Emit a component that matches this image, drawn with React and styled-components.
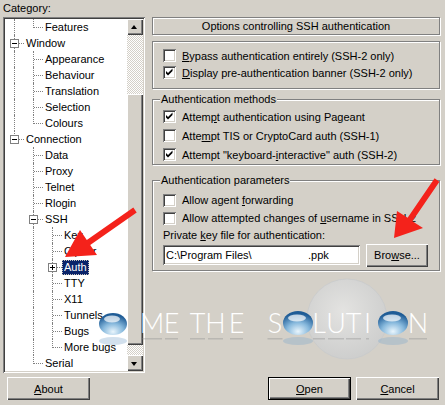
import React from "react";
import styled, { createGlobalStyle, css } from "styled-components";

const TREE = [
  { label: "Features", guides: ["pipe", "elbow"] },
  { label: "Window", guides: ["tee"], toggle: "minus" },
  { label: "Appearance", guides: ["pipe", "tee"] },
  { label: "Behaviour", guides: ["pipe", "tee"] },
  { label: "Translation", guides: ["pipe", "tee"] },
  { label: "Selection", guides: ["pipe", "tee"] },
  { label: "Colours", guides: ["pipe", "elbow"] },
  { label: "Connection", guides: ["elbow"], toggle: "minus" },
  { label: "Data", guides: ["blank", "tee"] },
  { label: "Proxy", guides: ["blank", "tee"] },
  { label: "Telnet", guides: ["blank", "tee"] },
  { label: "Rlogin", guides: ["blank", "tee"] },
  { label: "SSH", guides: ["blank", "tee"], toggle: "minus" },
  { label: "Kex", guides: ["blank", "pipe", "tee"] },
  { label: "Cipher", guides: ["blank", "pipe", "tee"] },
  { label: "Auth", guides: ["blank", "pipe", "tee"], toggle: "plus", selected: true },
  { label: "TTY", guides: ["blank", "pipe", "tee"] },
  { label: "X11", guides: ["blank", "pipe", "tee"] },
  { label: "Tunnels", guides: ["blank", "pipe", "tee"] },
  { label: "Bugs", guides: ["blank", "pipe", "tee"] },
  { label: "More bugs", guides: ["blank", "pipe", "elbow"] },
  { label: "Serial", guides: ["blank", "elbow"] },
];

function App() {
  return (
    <>
      <GlobalStyle />
      <Dialog>
        <Main>
          <LeftPane>
            <CategoryLabel>Category:</CategoryLabel>
            <TreeBox>
              <TreeList>
                {TREE.map((item) => (
                  <TreeRow key={item.label}>
                    {item.guides.map((g, i) => (
                      <Guide key={i} $kind={g}>
                        {item.toggle && i === item.guides.length - 1 && (
                          <Toggle $plus={item.toggle === "plus"} />
                        )}
                      </Guide>
                    ))}
                    <NodeLabel $selected={item.selected}>{item.label}</NodeLabel>
                  </TreeRow>
                ))}
              </TreeList>
              <ScrollBar>
                <ArrowButton $dir="up" />
                <Track $h={59} />
                <Thumb />
                <Track $h={10} />
                <ArrowButton $dir="down" />
              </ScrollBar>
            </TreeBox>
          </LeftPane>

          <RightPane>
            <Header>Options controlling SSH authentication</Header>

            <Group $mt={6} $pad="5px 0 7px">
              <CheckRow $h={17}>
                <Checkbox />
                <span><u>B</u>ypass authentication entirely (SSH-2 only)</span>
              </CheckRow>
              <CheckRow $h={17}>
                <Checkbox checked />
                <span><u>D</u>isplay pre-authentication banner (SSH-2 only)</span>
              </CheckRow>
            </Group>

            <Group $mt={10} $pad="0">
              <GroupTitle>Authentication methods</GroupTitle>
              <CheckRow $h={19} $first>
                <Checkbox checked />
                <span>Attem<u>p</u>t authentication using Pageant</span>
              </CheckRow>
              <CheckRow $h={19}>
                <Checkbox />
                <span>Atte<u>m</u>pt TIS or CryptoCard auth (SSH-1)</span>
              </CheckRow>
              <CheckRow $h={19}>
                <Checkbox checked />
                <span>Attempt "keyboard-<u>i</u>nteractive" auth (SSH-2)</span>
              </CheckRow>
            </Group>

            <Group $mt={15} $pad="0 0 3px">
              <GroupTitle>Authentication parameters</GroupTitle>
              <Spacer $h={4} />
              <CheckRow $h={18}>
                <Checkbox />
                <span>Allow agent <u>f</u>orwarding</span>
              </CheckRow>
              <CheckRow $h={18}>
                <Checkbox />
                <span>Allow attempted changes of <u>u</u>sername in SSH-2</span>
              </CheckRow>
              <FieldLabel>Private <u>k</u>ey file for authentication:</FieldLabel>
              <FileRow>
                <TextField>
                  <PathPart>{"C:\\Program Files\\"}</PathPart>
                  <span>.ppk</span>
                </TextField>
                <Button $w={62}>Bro<u>w</u>se...</Button>
              </FileRow>
            </Group>
          </RightPane>
        </Main>

        <ButtonBar>
          <Button $w={83}><u>A</u>bout</Button>
          <BarFill />
          <Button $w={83} $default><u>O</u>pen</Button>
          <Button $w={83}><u>C</u>ancel</Button>
        </ButtonBar>

        <Watermark />
        <Arrows />
      </Dialog>
    </>
  );
}

function Checkbox({ checked }) {
  return (
    <CheckBoxFrame>
      {checked && (
        <svg width="13" height="13" viewBox="0 0 13 13">
          <path d="M3 5 L5 7 L9.5 2.5 L9.5 5 L5 9.5 L3 7.5 Z" fill="#000" />
        </svg>
      )}
    </CheckBoxFrame>
  );
}

function Arrows() {
  return (
    <Overlay width="445" height="405" viewBox="0 0 445 405">
      <polygon
        points="133.3,207.5 86.8,240 80,230 65,257 97,255 90.2,245 136.7,212.5"
        fill="#f4221b"
      />
      <polygon
        points="434.6,178.2 407.6,217.7 397,211 394,238 423,228 412.4,221.3 439.4,181.8"
        fill="#f4221b"
      />
    </Overlay>
  );
}

// letters of the "Home The Solution" watermark (the H sits white on the white tree)
const LETTERS = [
  ["M", 152, 20], ["E", 171.5, 13], ["T", 197.5, 15], ["H", 215.5, 15], ["E", 236.5, 13],
  ["S", 275, 15], ["L", 319, 12], ["U", 336, 16], ["T", 353.5, 15], ["I", 367.5, 3],
  ["N", 418, 18],
];
const DROPS = [
  [113, 324, 14, 11],
  [298, 323, 15, 12],
  [393, 323, 15, 12],
];

function Watermark() {
  return (
    <Overlay width="445" height="405" viewBox="0 0 445 405">
      <defs>
        <radialGradient id="drop" cx="50%" cy="85%" r="75%">
          <stop offset="0" stopColor="#e9f5fc" />
          <stop offset="0.5" stopColor="#86b8dc" />
          <stop offset="1" stopColor="#1f5c96" />
        </radialGradient>
        <radialGradient id="globe" cx="45%" cy="40%" r="60%">
          <stop offset="0" stopColor="#eef0f2" stopOpacity="0.6" />
          <stop offset="1" stopColor="#c9cdd2" stopOpacity="0.55" />
        </radialGradient>
      </defs>
      <circle cx="347" cy="319" r="40" fill="url(#globe)" stroke="#c4c8cc" strokeOpacity="0.6" />

      {/* mirrored reflection under the word */}
      <g fill="#8a8a8a" opacity="0.35">
        {LETTERS.map(([, x, w], i) => (
          <rect key={i} x={x - w / 2} y="338" width={w} height="1.5" />
        ))}
        {DROPS.map(([cx, , rx], i) => (
          <ellipse key={i} cx={cx} cy="341" rx={rx} ry="4" fill="#7fa9cc" />
        ))}
      </g>

      <WatermarkText>
        {LETTERS.map(([ch, x], i) => (
          <text key={i} x={x} y="333" textAnchor="middle" fill="#fff">
            {ch}
          </text>
        ))}
      </WatermarkText>

      {DROPS.map(([cx, cy, rx, ry], i) => (
        <g key={i}>
          <ellipse cx={cx} cy={cy} rx={rx} ry={ry} fill="url(#drop)" />
          <ellipse cx={cx - 1} cy={cy - 5} rx={rx - 6} ry={3.5} fill="#fff" opacity="0.7" />
        </g>
      ))}
    </Overlay>
  );
}

/* Page styling */
const GlobalStyle = createGlobalStyle`
  html, body {
    margin: 0;
    padding: 0;
    background: #d4d0c8;
  }
  body {
    font-family: "Liberation Sans", Arial, sans-serif;
    font-size: 11px;
    color: #000;
  }
`;

const raised = css`
  background: #d4d0c8;
  box-shadow: inset 1px 1px #fff, inset -1px -1px #404040, inset -2px -2px #808080;
`;

const sunken = css`
  box-shadow: inset 1px 1px #808080, inset -1px -1px #fff, inset 2px 2px #404040,
    inset -2px -2px #d4d0c8;
`;

const etched = css`
  border: 1px solid #808080;
  box-shadow: inset 1px 1px #fff, 1px 1px #fff;
`;

const Dialog = styled.div`
  position: relative;
  width: 445px;
  height: 405px;
  overflow: hidden;
  background: #d4d0c8;
`;

const Main = styled.div`
  display: flex;
  height: 373px;
`;

const LeftPane = styled.div`
  display: flex;
  flex-direction: column;
  width: 142px;
  margin-left: 3px;
`;

const CategoryLabel = styled.div`
  height: 17px;
  line-height: 16px;
`;

const TreeBox = styled.div`
  flex: 1;
  display: flex;
  padding: 2px;
  background: #fff;
  ${sunken};
`;

const TreeList = styled.div`
  flex: 1;
  overflow: hidden;
`;

const TreeRow = styled.div`
  display: flex;
  align-items: center;
  height: 16px;
  white-space: nowrap;
`;

const Guide = styled.span`
  position: relative;
  flex: none;
  width: 19px;
  height: 16px;

  &::before {
    content: "";
    position: absolute;
    left: 9px;
    top: 0;
    height: ${(p) => (p.$kind === "blank" ? 0 : p.$kind === "elbow" ? 9 : 16)}px;
    border-left: ${(p) => (p.$kind === "blank" ? "none" : "1px dotted #808080")};
  }

  &::after {
    content: "";
    position: absolute;
    left: 10px;
    top: 8px;
    width: 9px;
    border-top: ${(p) =>
      p.$kind === "tee" || p.$kind === "elbow" ? "1px dotted #808080" : "none"};
  }
`;

const Toggle = styled.span`
  position: absolute;
  z-index: 1;
  left: 5px;
  top: 4px;
  width: 7px;
  height: 7px;
  border: 1px solid #808080;
  background: #fff;

  &::before {
    content: "";
    position: absolute;
    left: 1px;
    top: 3px;
    width: 5px;
    height: 1px;
    background: #000;
  }

  &::after {
    content: "";
    position: absolute;
    left: 3px;
    top: 1px;
    width: 1px;
    height: 5px;
    background: ${(p) => (p.$plus ? "#000" : "transparent")};
  }
`;

const NodeLabel = styled.span`
  padding: 0 2px;
  line-height: 15px;
  height: 15px;
  background: ${(p) => (p.$selected ? "#0a246a" : "transparent")};
  color: ${(p) => (p.$selected ? "#fff" : "#000")};
  outline: ${(p) => (p.$selected ? "1px dotted #c8c4bc" : "none")};
  outline-offset: -1px;
`;

const ScrollBar = styled.div`
  display: flex;
  flex-direction: column;
  width: 16px;
`;

const ArrowButton = styled.div`
  position: relative;
  height: 16px;
  ${raised};

  &::after {
    content: "";
    position: absolute;
    left: 4px;
    top: ${(p) => (p.$dir === "up" ? 6 : 7)}px;
    border-left: 3.5px solid transparent;
    border-right: 3.5px solid transparent;
    ${(p) =>
      p.$dir === "up" ? "border-bottom: 4px solid #000;" : "border-top: 4px solid #000;"}
  }
`;

const Track = styled.div`
  height: ${(p) => p.$h}px;
  background: repeating-conic-gradient(#fff 0 25%, #d4d0c8 0 50%) 0 0 / 2px 2px;
`;

const Thumb = styled.div`
  height: 251px;
  ${raised};
`;

const RightPane = styled.div`
  display: flex;
  flex-direction: column;
  width: 288px;
  margin-left: 7px;
  padding-top: 17px;
`;

const Header = styled.div`
  height: 16px;
  line-height: 16px;
  text-align: center;
  ${etched};
`;

const Group = styled.div`
  margin-top: ${(p) => p.$mt}px;
  padding: ${(p) => p.$pad};
  ${etched};
`;

const GroupTitle = styled.div`
  display: table;
  margin: -7px 0 0 7px;
  padding: 0 1px;
  line-height: 13px;
  background: #d4d0c8;
`;

const Spacer = styled.div`
  height: ${(p) => p.$h}px;
`;

const CheckRow = styled.div`
  display: flex;
  align-items: center;
  gap: 6px;
  height: ${(p) => p.$h}px;
  margin-top: ${(p) => (p.$first ? 1 : 0)}px;
  padding-left: 10px;
  white-space: nowrap;
`;

const CheckBoxFrame = styled.span`
  display: block;
  flex: none;
  width: 13px;
  height: 13px;
  background: #fff;
  ${sunken};

  svg {
    display: block;
  }
`;

const FieldLabel = styled.div`
  height: 16px;
  line-height: 16px;
  padding-left: 10px;
`;

const FileRow = styled.div`
  display: flex;
  align-items: center;
  gap: 6px;
  height: 24px;
  padding-left: 10px;
`;

const TextField = styled.div`
  display: flex;
  align-items: center;
  box-sizing: border-box;
  width: 197px;
  height: 20px;
  padding: 0 3px;
  background: #fff;
  white-space: pre;
  ${sunken};
`;

const PathPart = styled.span`
  display: inline-block;
  width: 142px;
`;

const Button = styled.div`
  box-sizing: border-box;
  display: flex;
  align-items: center;
  justify-content: center;
  width: ${(p) => p.$w}px;
  height: 23px;
  ${raised};
  ${(p) =>
    p.$default &&
    css`
      border: 1px solid #000;
    `}
`;

const ButtonBar = styled.div`
  display: flex;
  gap: 5px;
  padding: 4px 6px 0 7px;
`;

const BarFill = styled.div`
  flex: 1;
`;

const Overlay = styled.svg`
  position: absolute;
  left: 0;
  top: 0;
  pointer-events: none;
`;

const WatermarkText = styled.g`
  font-family: Lato, "DejaVu Sans", sans-serif;
  font-weight: 300;
  font-size: 27px;
`;

export default App;
